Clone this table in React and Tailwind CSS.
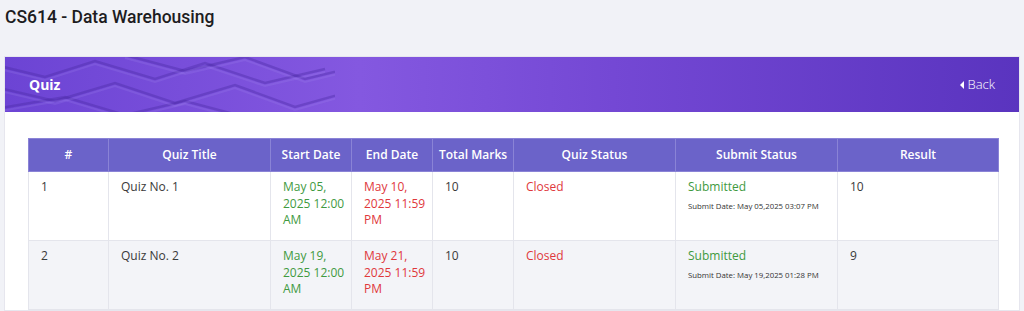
const rows = [
  {
    n: '1',
    title: 'Quiz No. 1',
    start: ['May 05,', '2025 12:00', 'AM'],
    end: ['May 10,', '2025 11:59', 'PM'],
    marks: '10',
    status: 'Closed',
    submitDate: 'Submit Date: May 05,2025 03:07 PM',
    result: '10',
  },
  {
    n: '2',
    title: 'Quiz No. 2',
    start: ['May 19,', '2025 12:00', 'AM'],
    end: ['May 21,', '2025 11:59', 'PM'],
    marks: '10',
    status: 'Closed',
    submitDate: 'Submit Date: May 19,2025 01:28 PM',
    result: '9',
  },
]

const cols = ['#', 'Quiz Title', 'Start Date', 'End Date', 'Total Marks', 'Quiz Status', 'Submit Status', 'Result']

function Waves() {
  // zig-zag pattern on the left of the banner
  const lines = [
    'M-10 8 L40 20 L90 4 L150 22 L200 6 L260 26 L320 12',
    'M-10 30 L50 44 L110 26 L170 46 L230 28 L290 50 L340 36',
    'M-10 52 L60 40 L120 58 L180 44 L240 60',
    'M120 -2 L180 14 L240 0 L300 22 L350 10',
  ]
  return (
    <svg className="absolute left-0 top-0 h-full w-[330px] pointer-events-none" viewBox="0 0 330 55" preserveAspectRatio="none">
      {lines.map((d, i) => (
        <path key={i} d={d} fill="none" stroke="#4a2aa6" strokeOpacity="0.4" strokeWidth="2.5" />
      ))}
      {lines.map((d, i) => (
        <path key={'h' + i} d={d} transform="translate(0 3)" fill="none" stroke="#a58af0" strokeOpacity="0.2" strokeWidth="2" />
      ))}
    </svg>
  )
}

const cell = 'border border-[#e4e5ec] pl-[12px] pr-[4px] pt-[7px] leading-[16.5px]'

export default function App() {
  return (
    <div className="min-h-[311px] bg-[#f1f2f7] pt-[4px] font-['Open_Sans',sans-serif]">
      {/* Page title */}
      <h1 className="px-[5px] h-[26px] flex items-center text-[17.5px] font-medium text-[#1d1d1f] font-['Roboto',sans-serif]">
        CS614 - Data Warehousing
      </h1>

      {/* Card */}
      <div className="mx-[4px] mt-[26px] bg-white border border-[#e6e6ee]">
        <div className="relative h-[55px] flex items-center justify-between px-[24px] overflow-hidden bg-[linear-gradient(90deg,#6c44d4_0%,#8458e0_35%,#7448d4_60%,#5a34bf_100%)]">
          <Waves />
          <span className="relative text-white text-[14px] font-bold">Quiz</span>
          <span className="relative flex items-center gap-[3px] text-white text-[13px] font-light">
            <span className="inline-block w-0 h-0 border-y-[4px] border-y-transparent border-r-[4px] border-r-white" />
            Back
          </span>
        </div>

        <div className="px-[23px] pt-[26px]">
          <table className="w-[970px] border-collapse text-[12px] text-[#3a3a3a] table-fixed">
            <colgroup>
              <col className="w-[80px]" />
              <col className="w-[162px]" />
              <col className="w-[81px]" />
              <col className="w-[81px]" />
              <col className="w-[81px]" />
              <col className="w-[162px]" />
              <col className="w-[162px]" />
              <col className="w-[161px]" />
            </colgroup>
            <thead>
              <tr className="bg-[#6b63c9] h-[33px]">
                {cols.map((c) => (
                  <th key={c} className="border border-[#8a83d6] text-white font-semibold text-[12px] text-center whitespace-nowrap">
                    {c}
                  </th>
                ))}
              </tr>
            </thead>
            <tbody>
              {rows.map((r, i) => (
                <tr key={r.n} className={`h-[69px] align-top ${i % 2 ? 'bg-[#f3f4f8]' : 'bg-white'}`}>
                  <td className={cell}>{r.n}</td>
                  <td className={cell}>{r.title}</td>
                  <td className={`${cell} text-[#3f9a3f] whitespace-nowrap`}>
                    {r.start.map((l) => (
                      <div key={l}>{l}</div>
                    ))}
                  </td>
                  <td className={`${cell} text-[#e0383c] whitespace-nowrap`}>
                    {r.end.map((l) => (
                      <div key={l}>{l}</div>
                    ))}
                  </td>
                  <td className={cell}>{r.marks}</td>
                  <td className={`${cell} text-[#e0383c]`}>{r.status}</td>
                  <td className={cell}>
                    <div className="text-[#3f9a3f]">Submitted</div>
                    <div className="text-[7.8px] text-[#333] mt-[2px] whitespace-nowrap">{r.submitDate}</div>
                  </td>
                  <td className={cell}>{r.result}</td>
                </tr>
              ))}
            </tbody>
          </table>
        </div>
      </div>
    </div>
  )
}
